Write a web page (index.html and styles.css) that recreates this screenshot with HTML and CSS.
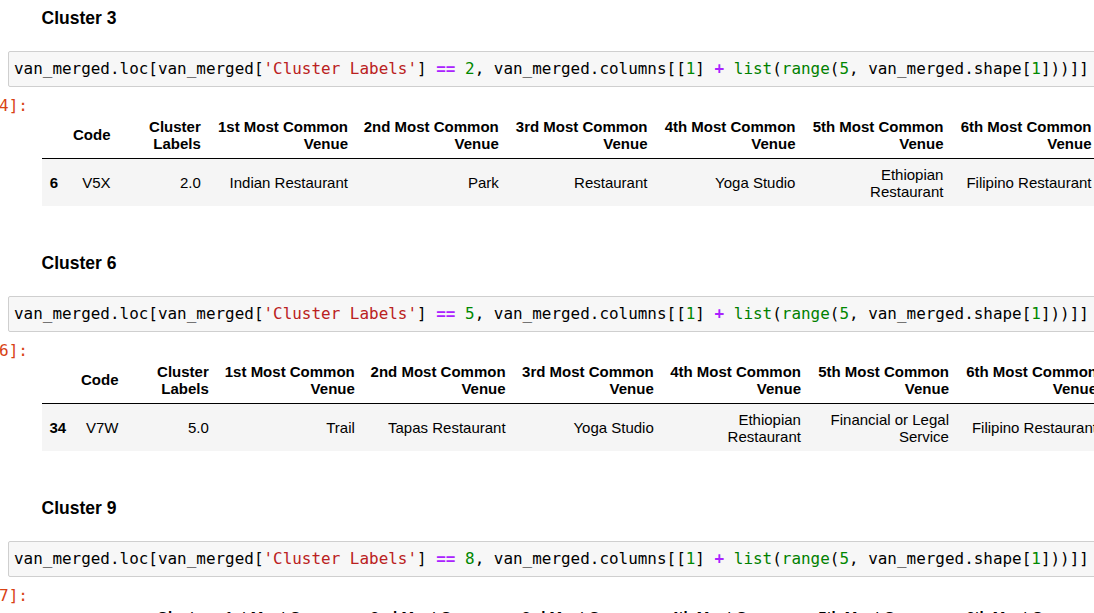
FILE: index.html
```html
<!DOCTYPE html>
<html lang="en">
<head>
<meta charset="utf-8">
<title>Clusters</title>
<link rel="stylesheet" href="styles.css">
</head>
<body>
<div class="nb">

  <section class="group">
    <h4 class="md-head">Cluster 3</h4>
    <div class="code-box">van_merged.loc[van_merged[<span class="s">'Cluster Labels'</span>] <span class="o">==</span> <span class="m">2</span>, van_merged.columns[[<span class="m">1</span>] <span class="o">+</span> <span class="b">list</span>(<span class="b">range</span>(<span class="m">5</span>, van_merged.shape[<span class="m">1</span>]))]]</div>
    <div class="output">
      <div class="out-prompt"><span>Out[4]:</span></div>
      <table class="df t1">
        <colgroup>
          <col class="w-idx1"><col class="w-code"><col class="w-cl"><col class="w-c1"><col class="w-c2"><col class="w-c3"><col class="w-c4"><col class="w-c5"><col class="w-c6">
        </colgroup>
        <thead>
          <tr><th></th><th>Code</th><th>Cluster Labels</th><th>1st Most Common Venue</th><th>2nd Most Common Venue</th><th>3rd Most Common Venue</th><th>4th Most Common Venue</th><th>5th Most Common Venue</th><th>6th Most Common Venue</th></tr>
        </thead>
        <tbody>
          <tr><th>6</th><td>V5X</td><td>2.0</td><td>Indian Restaurant</td><td>Park</td><td>Restaurant</td><td>Yoga Studio</td><td>Ethiopian Restaurant</td><td>Filipino Restaurant</td></tr>
        </tbody>
      </table>
    </div>
  </section>

  <section class="group">
    <h4 class="md-head">Cluster 6</h4>
    <div class="code-box">van_merged.loc[van_merged[<span class="s">'Cluster Labels'</span>] <span class="o">==</span> <span class="m">5</span>, van_merged.columns[[<span class="m">1</span>] <span class="o">+</span> <span class="b">list</span>(<span class="b">range</span>(<span class="m">5</span>, van_merged.shape[<span class="m">1</span>]))]]</div>
    <div class="output">
      <div class="out-prompt"><span>Out[6]:</span></div>
      <table class="df t2">
        <colgroup>
          <col class="w-idx2"><col class="w-code"><col class="w-cl"><col class="w-c1b"><col class="w-c2"><col class="w-c3b"><col class="w-c4b"><col class="w-c5"><col class="w-c6">
        </colgroup>
        <thead>
          <tr><th></th><th>Code</th><th>Cluster Labels</th><th>1st Most Common Venue</th><th>2nd Most Common Venue</th><th>3rd Most Common Venue</th><th>4th Most Common Venue</th><th>5th Most Common Venue</th><th>6th Most Common Venue</th></tr>
        </thead>
        <tbody>
          <tr><th>34</th><td>V7W</td><td>5.0</td><td>Trail</td><td>Tapas Restaurant</td><td>Yoga Studio</td><td>Ethiopian Restaurant</td><td>Financial or Legal Service</td><td>Filipino Restaurant</td></tr>
        </tbody>
      </table>
    </div>
  </section>

  <section class="group">
    <h4 class="md-head">Cluster 9</h4>
    <div class="code-box">van_merged.loc[van_merged[<span class="s">'Cluster Labels'</span>] <span class="o">==</span> <span class="m">8</span>, van_merged.columns[[<span class="m">1</span>] <span class="o">+</span> <span class="b">list</span>(<span class="b">range</span>(<span class="m">5</span>, van_merged.shape[<span class="m">1</span>]))]]</div>
    <div class="output">
      <div class="out-prompt"><span>Out[7]:</span></div>
      <table class="df t2">
        <colgroup>
          <col class="w-idx2"><col class="w-code"><col class="w-cl"><col class="w-c1b"><col class="w-c2"><col class="w-c3b"><col class="w-c4b"><col class="w-c5"><col class="w-c6">
        </colgroup>
        <thead>
          <tr><th></th><th>Code</th><th>Cluster Labels</th><th>1st Most Common Venue</th><th>2nd Most Common Venue</th><th>3rd Most Common Venue</th><th>4th Most Common Venue</th><th>5th Most Common Venue</th><th>6th Most Common Venue</th></tr>
        </thead>
      </table>
    </div>
  </section>

</div>
</body>
</html>
```

FILE: styles.css
```css
html, body {
  margin: 0;
  padding: 0;
  background: #ffffff;
}

body {
  width: 1094px;
  height: 613px;
  overflow: hidden;
}

.nb {
  width: 1240px;
}

.group {
  padding-bottom: 39px;
}

.md-head {
  margin: 0 0 0 41.5px;
  padding-top: 8px;
  font-family: "Liberation Sans", Arial, sans-serif;
  font-size: 17.5px;
  line-height: 21px;
  font-weight: bold;
  color: #000000;
}

.code-box {
  margin: 22px 0 0 8px;
  border: 1px solid #cfcfcf;
  border-radius: 2px;
  background: #f7f7f7;
  padding: 7px 5px;
  font-family: "DejaVu Sans Mono", monospace;
  font-size: 15.95px;
  line-height: 20px;
  white-space: pre;
  color: #000000;
}

.code-box .s { color: #ba2121; }
.code-box .o { color: #aa22ff; font-weight: bold; }
.code-box .m { color: #008800; }
.code-box .b { color: #008000; }

.output {
  display: flex;
  align-items: flex-start;
}

.out-prompt {
  flex: none;
  width: 28px;
  display: flex;
  justify-content: flex-end;
  overflow: hidden;
  padding-top: 9px;
  font-family: "DejaVu Sans Mono", monospace;
  font-size: 16px;
  line-height: 20px;
  color: #d84315;
  white-space: nowrap;
}

.out-prompt span {
  flex: none;
}

.df {
  flex: none;
  border-collapse: collapse;
  border-spacing: 0;
  table-layout: fixed;
  margin: 24px 0 0 14px;
  font-family: "Liberation Sans", Arial, sans-serif;
  font-size: 15px;
  color: #000000;
}

.t1 { width: 1057px; }
.t2 { width: 1061px; }

.df th,
.df td {
  padding: 6.5px 7.5px;
  line-height: 17px;
  text-align: right;
  vertical-align: middle;
  white-space: normal;
}

.df thead th {
  font-weight: bold;
  border-bottom: 1px solid #000000;
}

.df tbody tr {
  background: #f5f5f5;
}

.df tbody th {
  font-weight: bold;
}

.w-idx1 { width: 23.5px; }
.w-idx2 { width: 31.5px; }
.w-code { width: 52.5px; }
.w-cl   { width: 90.3px; }
.w-c1   { width: 147.2px; }
.w-c1b  { width: 146px; }
.w-c2   { width: 150.8px; }
.w-c3   { width: 148.7px; }
.w-c3b  { width: 148.2px; }
.w-c4   { width: 148px; }
.w-c4b  { width: 147.2px; }
.w-c5   { width: 148px; }
.w-c6   { width: 148px; }
```
